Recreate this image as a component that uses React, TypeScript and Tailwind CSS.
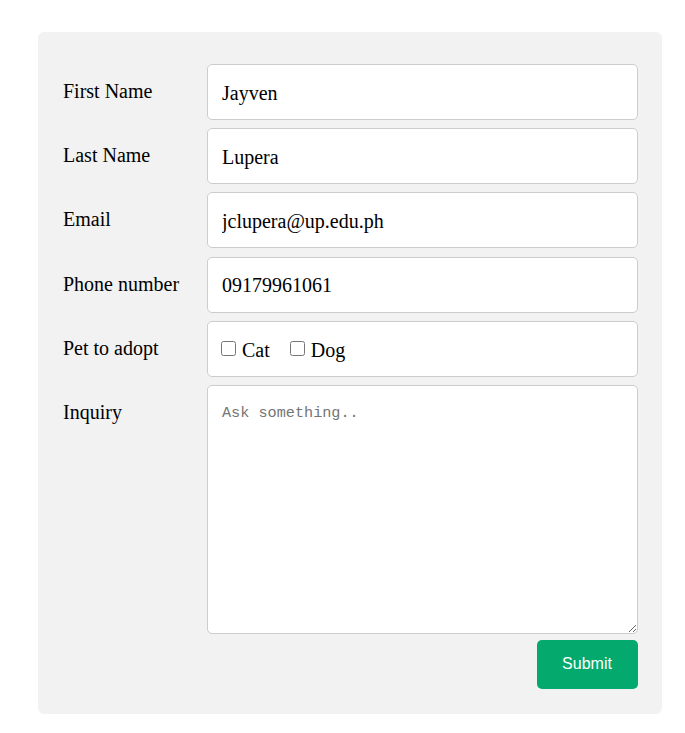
import { useState } from "react";

const fields = [
  { label: "First Name", value: "Jayven" },
  { label: "Last Name", value: "Lupera" },
  { label: "Email", value: "jclupera@up.edu.ph" },
  { label: "Phone number", value: "09179961061" },
];

export default function App() {
  const [values, setValues] = useState(fields.map((f) => f.value));
  const [inquiry, setInquiry] = useState("");

  return (
    <div className="min-h-screen bg-white pt-[32px] pl-[38px] font-['Liberation_Serif',serif] text-black">
      <form
        onSubmit={(e) => e.preventDefault()}
        className="w-[624px] rounded-[6px] bg-[#f2f2f2] pl-[25px] pr-[24.5px] pt-[32px] pb-[25px]"
      >
        {fields.map((f, i) => (
          <div key={f.label} className="mb-[8.2px] flex">
            <label className="w-[144px] shrink-0 pt-[16px] text-[20px] leading-[22px]">{f.label}</label>
            <input
              type="text"
              value={values[i]}
              onChange={(e) => {
                const next = [...values];
                next[i] = e.target.value;
                setValues(next);
              }}
              className="h-[56px] flex-1 rounded-[5px] border border-[#cccccc] bg-white px-[14px] pt-[2px] text-[20px] outline-none"
            />
          </div>
        ))}

        <div className="mb-[8.2px] flex">
          <label className="w-[144px] shrink-0 pt-[16px] text-[20px] leading-[22px]">Pet to adopt</label>
          <div className="flex h-[56px] flex-1 items-center rounded-[5px] border border-[#cccccc] bg-white px-[13px] pt-[2px] text-[20px]">
            <label className="flex items-center">
              <input type="checkbox" className="m-0 mb-[3px] h-[15px] w-[15px]" />
              <span className="ml-[6px]">Cat</span>
            </label>
            <label className="ml-[20px] flex items-center">
              <input type="checkbox" className="m-0 mb-[3px] h-[15px] w-[15px]" />
              <span className="ml-[6px]">Dog</span>
            </label>
          </div>
        </div>

        <div className="flex">
          <label className="w-[144px] shrink-0 pt-[16px] text-[20px] leading-[22px]">Inquiry</label>
          <textarea
            value={inquiry}
            onChange={(e) => setInquiry(e.target.value)}
            placeholder="Ask something.."
            className="h-[249px] flex-1 rounded-[5px] border border-[#cccccc] bg-white px-[14px] pt-[16px] pb-[14px] font-['Liberation_Mono',monospace] text-[15.2px] outline-none placeholder:text-[#757575]"
          />
        </div>

        <div className="mt-[6px] flex justify-end">
          <button
            type="submit"
            className="h-[49px] w-[101px] rounded-[5px] bg-[#04aa6d] font-['Liberation_Sans',sans-serif] text-[16px] text-white"
          >
            Submit
          </button>
        </div>
      </form>
    </div>
  );
}
